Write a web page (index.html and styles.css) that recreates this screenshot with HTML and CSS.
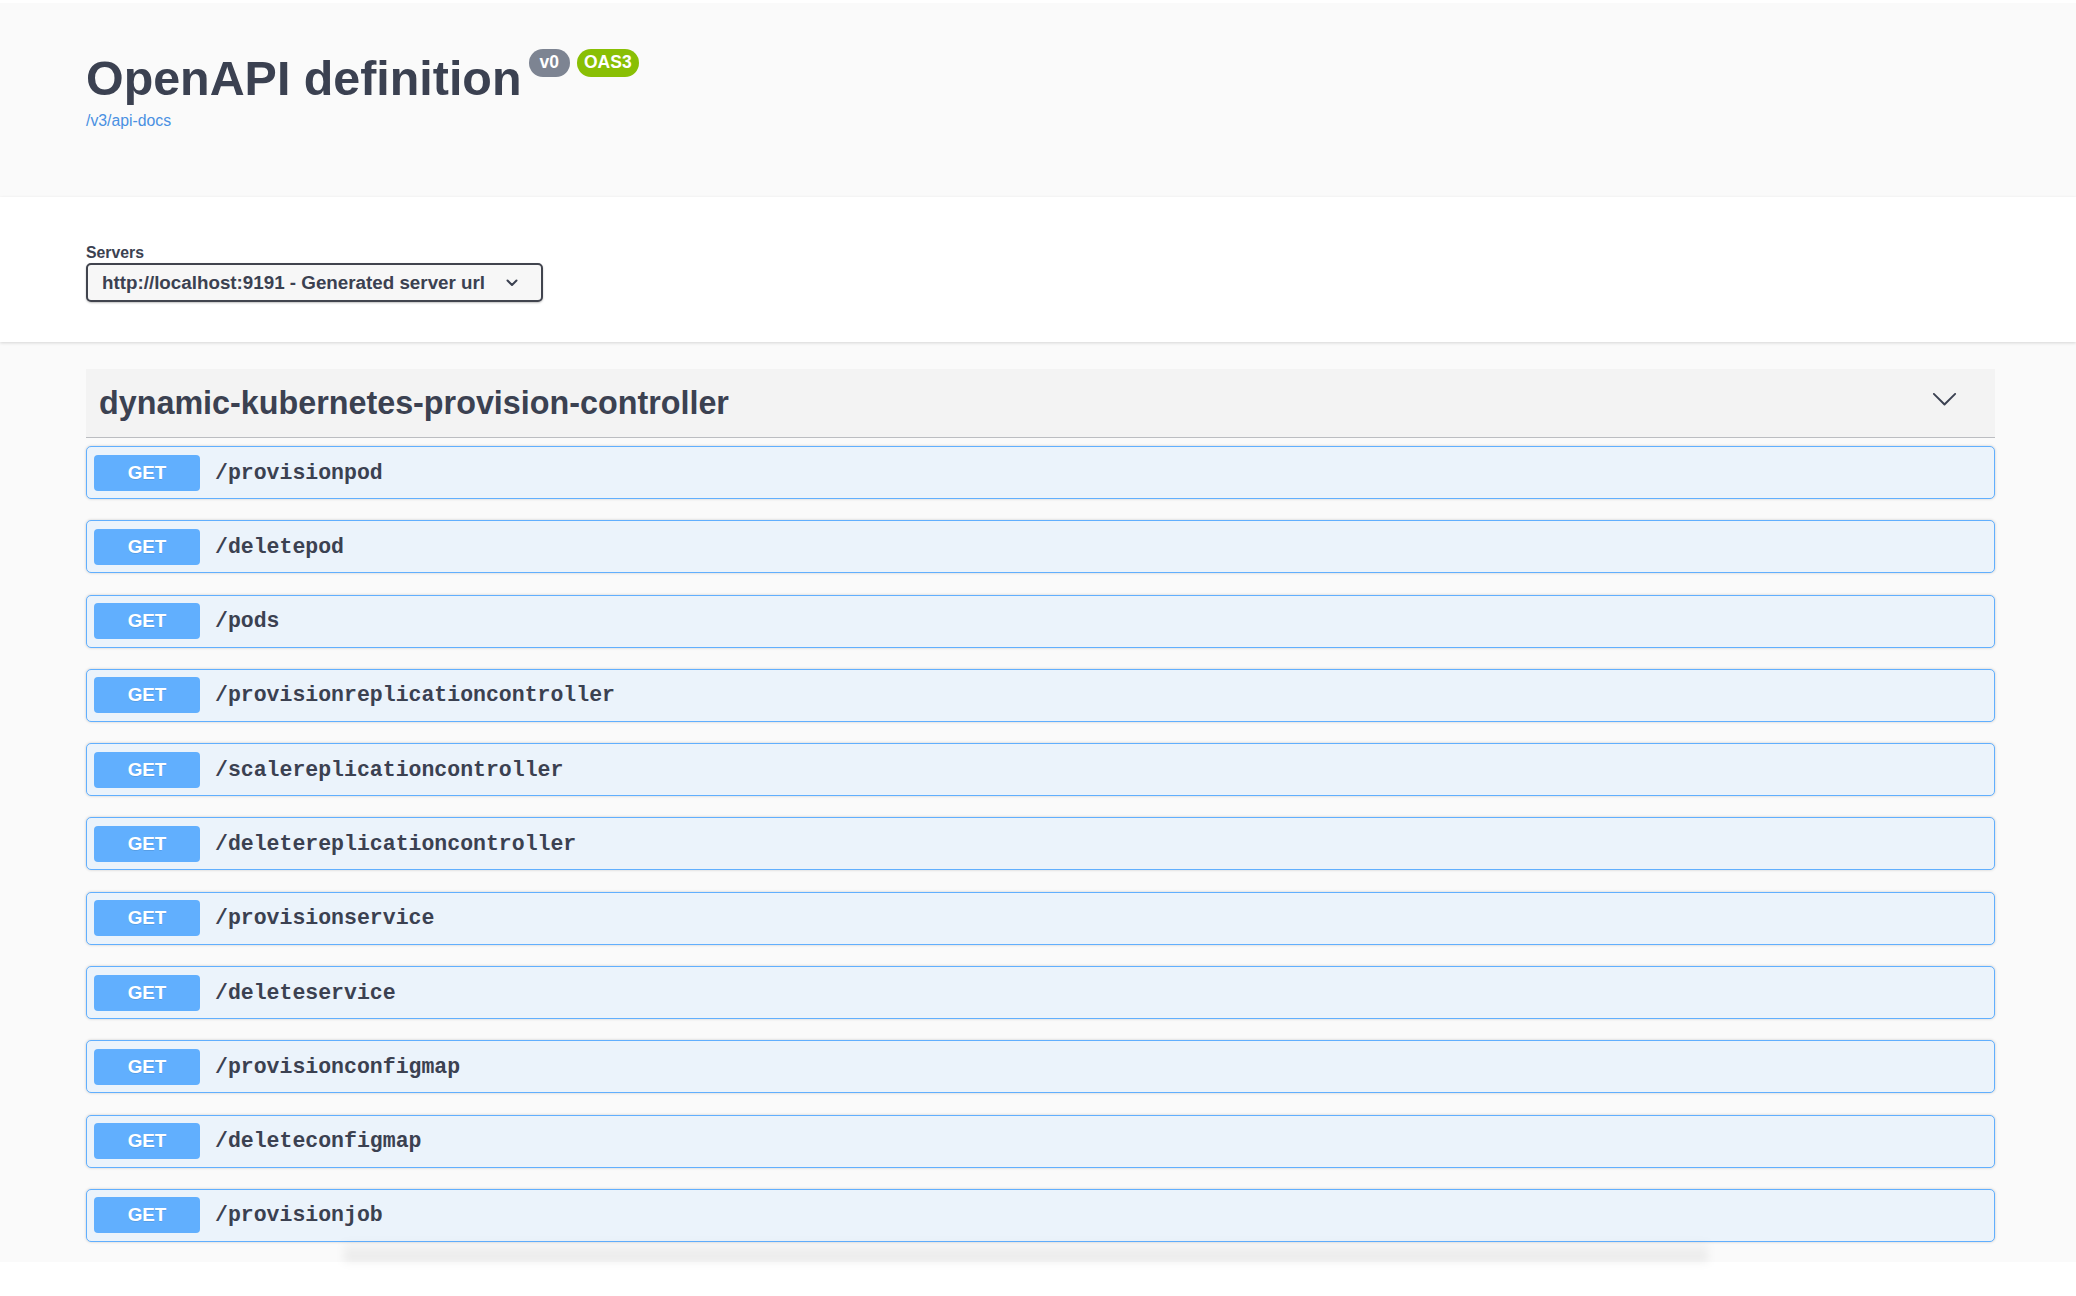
FILE: index.html
```html
<!DOCTYPE html>
<html lang="en">
<head>
<meta charset="utf-8">
<title>Swagger UI</title>
<link rel="stylesheet" href="styles.css">
</head>
<body>
<header class="info">
  <div class="wrap">
    <h2 class="title">
      <span class="title-text">OpenAPI definition</span>
      <span class="badges"><small class="badge ver">v0</small><small class="badge oas">OAS3</small></span>
    </h2>
    <a class="link" href="#">/v3/api-docs</a>
  </div>
</header>
<section class="scheme">
  <div class="wrap">
    <div class="servers-label">Servers</div>
    <div class="select">
      <span>http://localhost:9191 - Generated server url</span>
      <svg class="select-arrow" width="12" height="8" viewBox="0 0 12 8"><polyline points="1.5,1.5 6,6 10.5,1.5" fill="none" stroke="#3b4151" stroke-width="2" stroke-linecap="round" stroke-linejoin="round"/></svg>
    </div>
  </div>
</section>
<main class="ops">
  <div class="wrap">
    <div class="tag">
      <h3>dynamic-kubernetes-provision-controller</h3>
      <svg class="tag-arrow" width="27" height="27" viewBox="0 0 20 20"><path fill="#3b4151" d="M17.418 6.109c.272-.268.709-.268.979 0s.271.701 0 .969l-7.908 7.83c-.27.268-.707.268-.979 0l-7.908-7.830c-.27-.268-.27-.701 0-.969.271-.268.709-.268.979 0L10 13.25l7.418-7.141z"/></svg>
    </div>
    <div class="opblock"><span class="method">GET</span><span class="path">/provisionpod</span></div>
    <div class="opblock"><span class="method">GET</span><span class="path">/deletepod</span></div>
    <div class="opblock"><span class="method">GET</span><span class="path">/pods</span></div>
    <div class="opblock"><span class="method">GET</span><span class="path">/provisionreplicationcontroller</span></div>
    <div class="opblock"><span class="method">GET</span><span class="path">/scalereplicationcontroller</span></div>
    <div class="opblock"><span class="method">GET</span><span class="path">/deletereplicationcontroller</span></div>
    <div class="opblock"><span class="method">GET</span><span class="path">/provisionservice</span></div>
    <div class="opblock"><span class="method">GET</span><span class="path">/deleteservice</span></div>
    <div class="opblock"><span class="method">GET</span><span class="path">/provisionconfigmap</span></div>
    <div class="opblock"><span class="method">GET</span><span class="path">/deleteconfigmap</span></div>
    <div class="opblock"><span class="method">GET</span><span class="path">/provisionjob</span></div>
  </div>
  <div class="fade"></div>
</main>
<footer class="foot"></footer>
</body>
</html>
```
FILE: styles.css
```css
* { box-sizing: border-box; }
html, body { margin: 0; padding: 0; }
body {
  background: #ffffff;
  font-family: "Liberation Sans", Arial, Helvetica, sans-serif;
  color: #3b4151;
  padding-top: 3px;
}
.wrap {
  margin-left: 86px;
  width: 1909px;
}

/* info header */
.info {
  background: #fafafa;
  height: 194px;
  padding-top: 46px;
}
.title {
  display: flex;
  align-items: flex-start;
  margin: 0;
  font-size: 48.4px;
  line-height: 58px;
  font-weight: 700;
  color: #3b4151;
}
.badges {
  display: flex;
  gap: 7px;
  margin-left: 7px;
  margin-top: 0;
}
.badge {
  display: inline-block;
  font-size: 17.5px;
  line-height: 21.5px;
  font-weight: 700;
  color: #ffffff;
  border-radius: 60px;
  padding: 3px 7px;
}
.badge.ver { background: #7d8492; padding: 3px 11px; }
.badge.oas { background: #89bf04; }
.link {
  display: block;
  margin-top: 3.5px;
  font-size: 15.8px;
  line-height: 19px;
  color: #4990e2;
  text-decoration: none;
  width: max-content;
}

/* servers */
.scheme {
  background: #ffffff;
  height: 145px;
  padding-top: 47px;
  box-shadow: 0 1px 3px 0 rgba(0, 0, 0, 0.15);
  position: relative;
}
.servers-label {
  font-size: 15.8px;
  line-height: 18px;
  font-weight: 700;
  color: #3b4151;
}
.select {
  margin-top: 1px;
  width: 457px;
  height: 39px;
  border: 2px solid #41444e;
  border-radius: 5px;
  box-shadow: 0 1px 2px 0 rgba(0, 0, 0, 0.25);
  background: #f7f7f7;
  display: flex;
  align-items: center;
  justify-content: space-between;
  padding: 0 23px 0 14px;
  font-size: 18.8px;
  font-weight: 700;
  color: #3b4151;
}
.select-arrow { display: block; }

/* operations */
.ops {
  background: #fafafa;
  padding-top: 27px;
  padding-bottom: 0;
}
.tag {
  height: 69px;
  background: #f3f3f3;
  border-bottom: 1px solid rgba(59, 65, 81, 0.3);
  display: flex;
  align-items: center;
  justify-content: space-between;
  padding: 0 37px 0 13px;
  margin-bottom: 8px;
}
.tag h3 {
  margin: 0;
  font-size: 32.3px;
  font-weight: 700;
  color: #3b4151;
}
.tag-arrow { display: block; margin-bottom: 10px; }
.opblock {
  height: 53px;
  margin-bottom: 21.3px;
  border: 1px solid #61affe;
  border-radius: 5px;
  background: #ebf3fb;
  box-shadow: 0 0 3px rgba(0, 0, 0, 0.19);
  display: flex;
  align-items: center;
  padding: 0 7px;
}
.method {
  width: 106px;
  height: 36px;
  border-radius: 4px;
  background: #61affe;
  color: #ffffff;
  font-size: 18.8px;
  font-weight: 700;
  display: flex;
  align-items: center;
  justify-content: center;
  text-shadow: 0 1px 0 rgba(0, 0, 0, 0.1);
}
.path {
  padding-left: 15px;
  font-family: "Liberation Mono", "Courier New", monospace;
  font-size: 21.5px;
  font-weight: 700;
  color: #3b4151;
}
.ops .opblock:last-child { margin-bottom: 0; }
.fade {
  height: 20px;
  margin: 0 368px 0 344px;
  background: linear-gradient(to bottom, rgba(0, 0, 0, 0.02), rgba(0, 0, 0, 0.07));
  filter: blur(4px);
}
.foot {
  background: #ffffff;
  height: 40px;
}
```
